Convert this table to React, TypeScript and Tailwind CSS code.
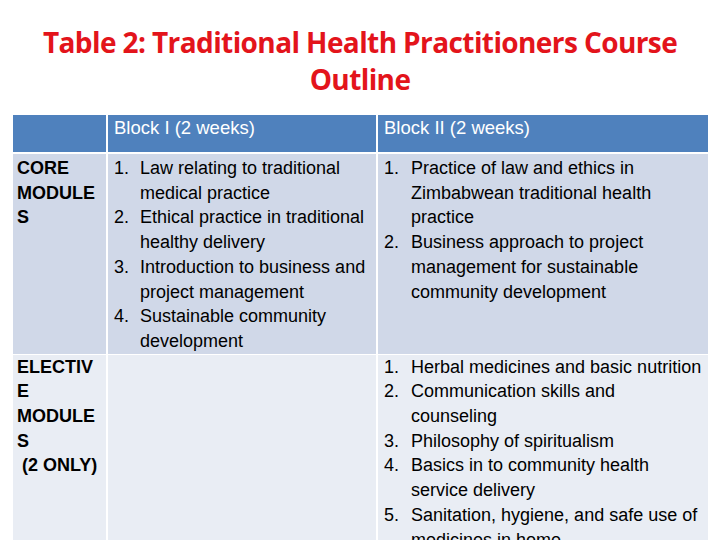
import React from "react";

type Item = { n: string; lines: string[] };

const blockOne: Item[] = [
  { n: "1.", lines: ["Law relating to traditional", "medical practice"] },
  { n: "2.", lines: ["Ethical practice in traditional", "healthy delivery"] },
  { n: "3.", lines: ["Introduction to business and", "project management"] },
  { n: "4.", lines: ["Sustainable community", "development"] },
];

const blockTwo: Item[] = [
  { n: "1.", lines: ["Practice of law and ethics in", "Zimbabwean traditional health", "practice"] },
  { n: "2.", lines: ["Business approach to project", "management for sustainable", "community development"] },
];

const electives: Item[] = [
  { n: "1.", lines: ["Herbal medicines and basic nutrition"] },
  { n: "2.", lines: ["Communication skills and", "counseling"] },
  { n: "3.", lines: ["Philosophy of spiritualism"] },
  { n: "4.", lines: ["Basics in to community health", "service delivery"] },
  { n: "5.", lines: ["Sanitation, hygiene, and safe use of", "medicines in home"] },
];

const NumberedList: React.FC<{ items: Item[]; numWidth: string }> = ({ items, numWidth }) => (
  <div>
    {items.map((it) => (
      <div key={it.n} className="flex">
        <span className={`${numWidth} shrink-0`}>{it.n}</span>
        <div>
          {it.lines.map((l) => (
            <div key={l} className="whitespace-nowrap">
              {l}
            </div>
          ))}
        </div>
      </div>
    ))}
  </div>
);

export default function App() {
  return (
    <div className="h-[540px] w-[720px] overflow-hidden bg-white">
      {/* Title */}
      <h1
        className="pt-[24px] text-center text-[28px] font-bold leading-[37px] tracking-[-0.6px] text-[#e3141b]"
        style={{ fontFamily: '"Open Sans", "Liberation Sans", sans-serif' }}
      >
        Table 2: Traditional Health Practitioners Course
        <br />
        Outline
      </h1>

      {/* Table */}
      <div
        className="mx-[13px] mt-[17px] w-[695px] text-[18px] leading-[24.7px] text-black"
        style={{ fontFamily: '"Liberation Sans", Arial, sans-serif' }}
      >
        {/* header */}
        <div className="flex h-[37px] gap-[2px] text-[18.5px] text-white">
          <div className="w-[93px] bg-[#4f81bd]" />
          <div className="w-[268px] bg-[#4f81bd] pl-[6px] pt-[1px]">Block I (2 weeks)</div>
          <div className="flex-1 bg-[#4f81bd] pl-[6px] pt-[1px]">Block II (2 weeks)</div>
        </div>

        {/* core modules */}
        <div className="mt-[2px] flex gap-[2px]">
          <div className="w-[93px] bg-[#d0d8e8] pl-[4px] pt-[2px] font-bold">
            CORE
            <br />
            MODULE
            <br />S
          </div>
          <div className="w-[268px] bg-[#d0d8e8] pl-[6px] pt-[2px]">
            <NumberedList items={blockOne} numWidth="w-[26px]" />
          </div>
          <div className="flex-1 bg-[#d0d8e8] pl-[6px] pt-[2px]">
            <NumberedList items={blockTwo} numWidth="w-[27px]" />
          </div>
        </div>

        {/* elective modules */}
        <div className="mt-[1px] flex gap-[2px]">
          <div className="w-[93px] bg-[#e9edf4] pl-[4px] font-bold">
            ELECTIV
            <br />
            E
            <br />
            MODULE
            <br />
            S
            <br />
            <span className="pl-[5px]">(2 ONLY)</span>
          </div>
          <div className="w-[268px] bg-[#e9edf4]" />
          <div className="flex-1 bg-[#e9edf4] pl-[6px]">
            <NumberedList items={electives} numWidth="w-[27px]" />
          </div>
        </div>
      </div>
    </div>
  );
}
